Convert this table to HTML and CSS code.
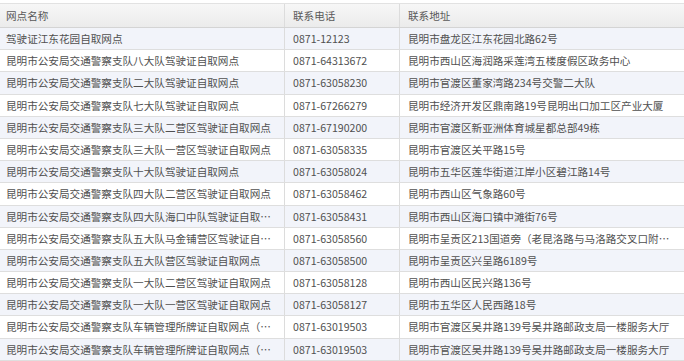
FILE: index.html
```html
<!DOCTYPE html>
<html lang="zh-CN">
<head>
<meta charset="utf-8">
<title>网点列表</title>
<link rel="stylesheet" href="styles.css">
</head>
<body>
<div class="grid">
  <div class="row head">
    <div class="cell c1">网点名称</div>
    <div class="cell c2">联系电话</div>
    <div class="cell c3">联系地址</div>
  </div>
  <div class="row alt">
    <div class="cell c1">驾驶证江东花园自取网点</div>
    <div class="cell c2">0871-12123</div>
    <div class="cell c3">昆明市盘龙区江东花园北路62号</div>
  </div>
  <div class="row">
    <div class="cell c1">昆明市公安局交通警察支队八大队驾驶证自取网点</div>
    <div class="cell c2">0871-64313672</div>
    <div class="cell c3">昆明市西山区海润路采莲湾五楼度假区政务中心</div>
  </div>
  <div class="row alt">
    <div class="cell c1">昆明市公安局交通警察支队二大队驾驶证自取网点</div>
    <div class="cell c2">0871-63058230</div>
    <div class="cell c3">昆明市官渡区董家湾路234号交警二大队</div>
  </div>
  <div class="row">
    <div class="cell c1">昆明市公安局交通警察支队七大队驾驶证自取网点</div>
    <div class="cell c2">0871-67266279</div>
    <div class="cell c3">昆明市经济开发区鼎南路19号昆明出口加工区产业大厦</div>
  </div>
  <div class="row alt">
    <div class="cell c1">昆明市公安局交通警察支队三大队二营区驾驶证自取网点</div>
    <div class="cell c2">0871-67190200</div>
    <div class="cell c3">昆明市官渡区新亚洲体育城星都总部49栋</div>
  </div>
  <div class="row">
    <div class="cell c1">昆明市公安局交通警察支队三大队一营区驾驶证自取网点</div>
    <div class="cell c2">0871-63058335</div>
    <div class="cell c3">昆明市官渡区关平路15号</div>
  </div>
  <div class="row alt">
    <div class="cell c1">昆明市公安局交通警察支队十大队驾驶证自取网点</div>
    <div class="cell c2">0871-63058024</div>
    <div class="cell c3">昆明市五华区莲华街道江岸小区碧江路14号</div>
  </div>
  <div class="row">
    <div class="cell c1">昆明市公安局交通警察支队四大队二营区驾驶证自取网点</div>
    <div class="cell c2">0871-63058462</div>
    <div class="cell c3">昆明市西山区气象路60号</div>
  </div>
  <div class="row alt">
    <div class="cell c1">昆明市公安局交通警察支队四大队海口中队驾驶证自取网点</div>
    <div class="cell c2">0871-63058431</div>
    <div class="cell c3">昆明市西山区海口镇中滩街76号</div>
  </div>
  <div class="row">
    <div class="cell c1">昆明市公安局交通警察支队五大队马金铺营区驾驶证自取网点</div>
    <div class="cell c2">0871-63058560</div>
    <div class="cell c3">昆明市呈贡区213国道旁（老昆洛路与马洛路交叉口附近）</div>
  </div>
  <div class="row alt">
    <div class="cell c1">昆明市公安局交通警察支队五大队营区驾驶证自取网点</div>
    <div class="cell c2">0871-63058500</div>
    <div class="cell c3">昆明市呈贡区兴呈路6189号</div>
  </div>
  <div class="row">
    <div class="cell c1">昆明市公安局交通警察支队一大队二营区驾驶证自取网点</div>
    <div class="cell c2">0871-63058128</div>
    <div class="cell c3">昆明市西山区民兴路136号</div>
  </div>
  <div class="row alt">
    <div class="cell c1">昆明市公安局交通警察支队一大队一营区驾驶证自取网点</div>
    <div class="cell c2">0871-63058127</div>
    <div class="cell c3">昆明市五华区人民西路18号</div>
  </div>
  <div class="row">
    <div class="cell c1">昆明市公安局交通警察支队车辆管理所牌证自取网点（吴井路）</div>
    <div class="cell c2">0871-63019503</div>
    <div class="cell c3">昆明市官渡区吴井路139号吴井路邮政支局一楼服务大厅</div>
  </div>
  <div class="row alt">
    <div class="cell c1">昆明市公安局交通警察支队车辆管理所牌证自取网点（吴井路）</div>
    <div class="cell c2">0871-63019503</div>
    <div class="cell c3">昆明市官渡区吴井路139号吴井路邮政支局一楼服务大厅</div>
  </div>
</div>
</body>
</html>
```

FILE: styles.css
```css
html, body {
  margin: 0;
  padding: 0;
  background: #ffffff;
}

body {
  font-family: "Noto Sans CJK SC", "Noto Sans", sans-serif;
  font-size: 10.6px;
  color: #505050;
  overflow: hidden;
}

.grid {
  margin-top: 3px;
  width: 684px;
}

.row {
  display: flex;
  height: 22.2px;
  box-sizing: border-box;
  border-bottom: 1px solid #dedede;
  background: #ffffff;
}

.row.alt {
  background: #f2f4fa;
}

.row.head {
  height: 25px;
  border-top: 1px solid #e2e2e2;
  border-bottom: 1px solid #d4d4d4;
  background: linear-gradient(#f7f7f7, #ebebeb);
  color: #595959;
}

.cell {
  display: block;
  box-sizing: border-box;
  padding: 0 10px 0 6px;
  border-right: 1px solid #dcdcdc;
  white-space: nowrap;
  overflow: hidden;
  text-overflow: ellipsis;
  line-height: 21px;
}

.head .cell {
  line-height: 23px;
}

.c1 {
  width: 285px;
  flex: none;
}

.c2 {
  width: 115px;
  flex: none;
  padding-left: 8px;
}

.c3 {
  flex: 1;
  min-width: 0;
  padding-left: 8px;
  padding-right: 12px;
  border-right: none;
}
```
